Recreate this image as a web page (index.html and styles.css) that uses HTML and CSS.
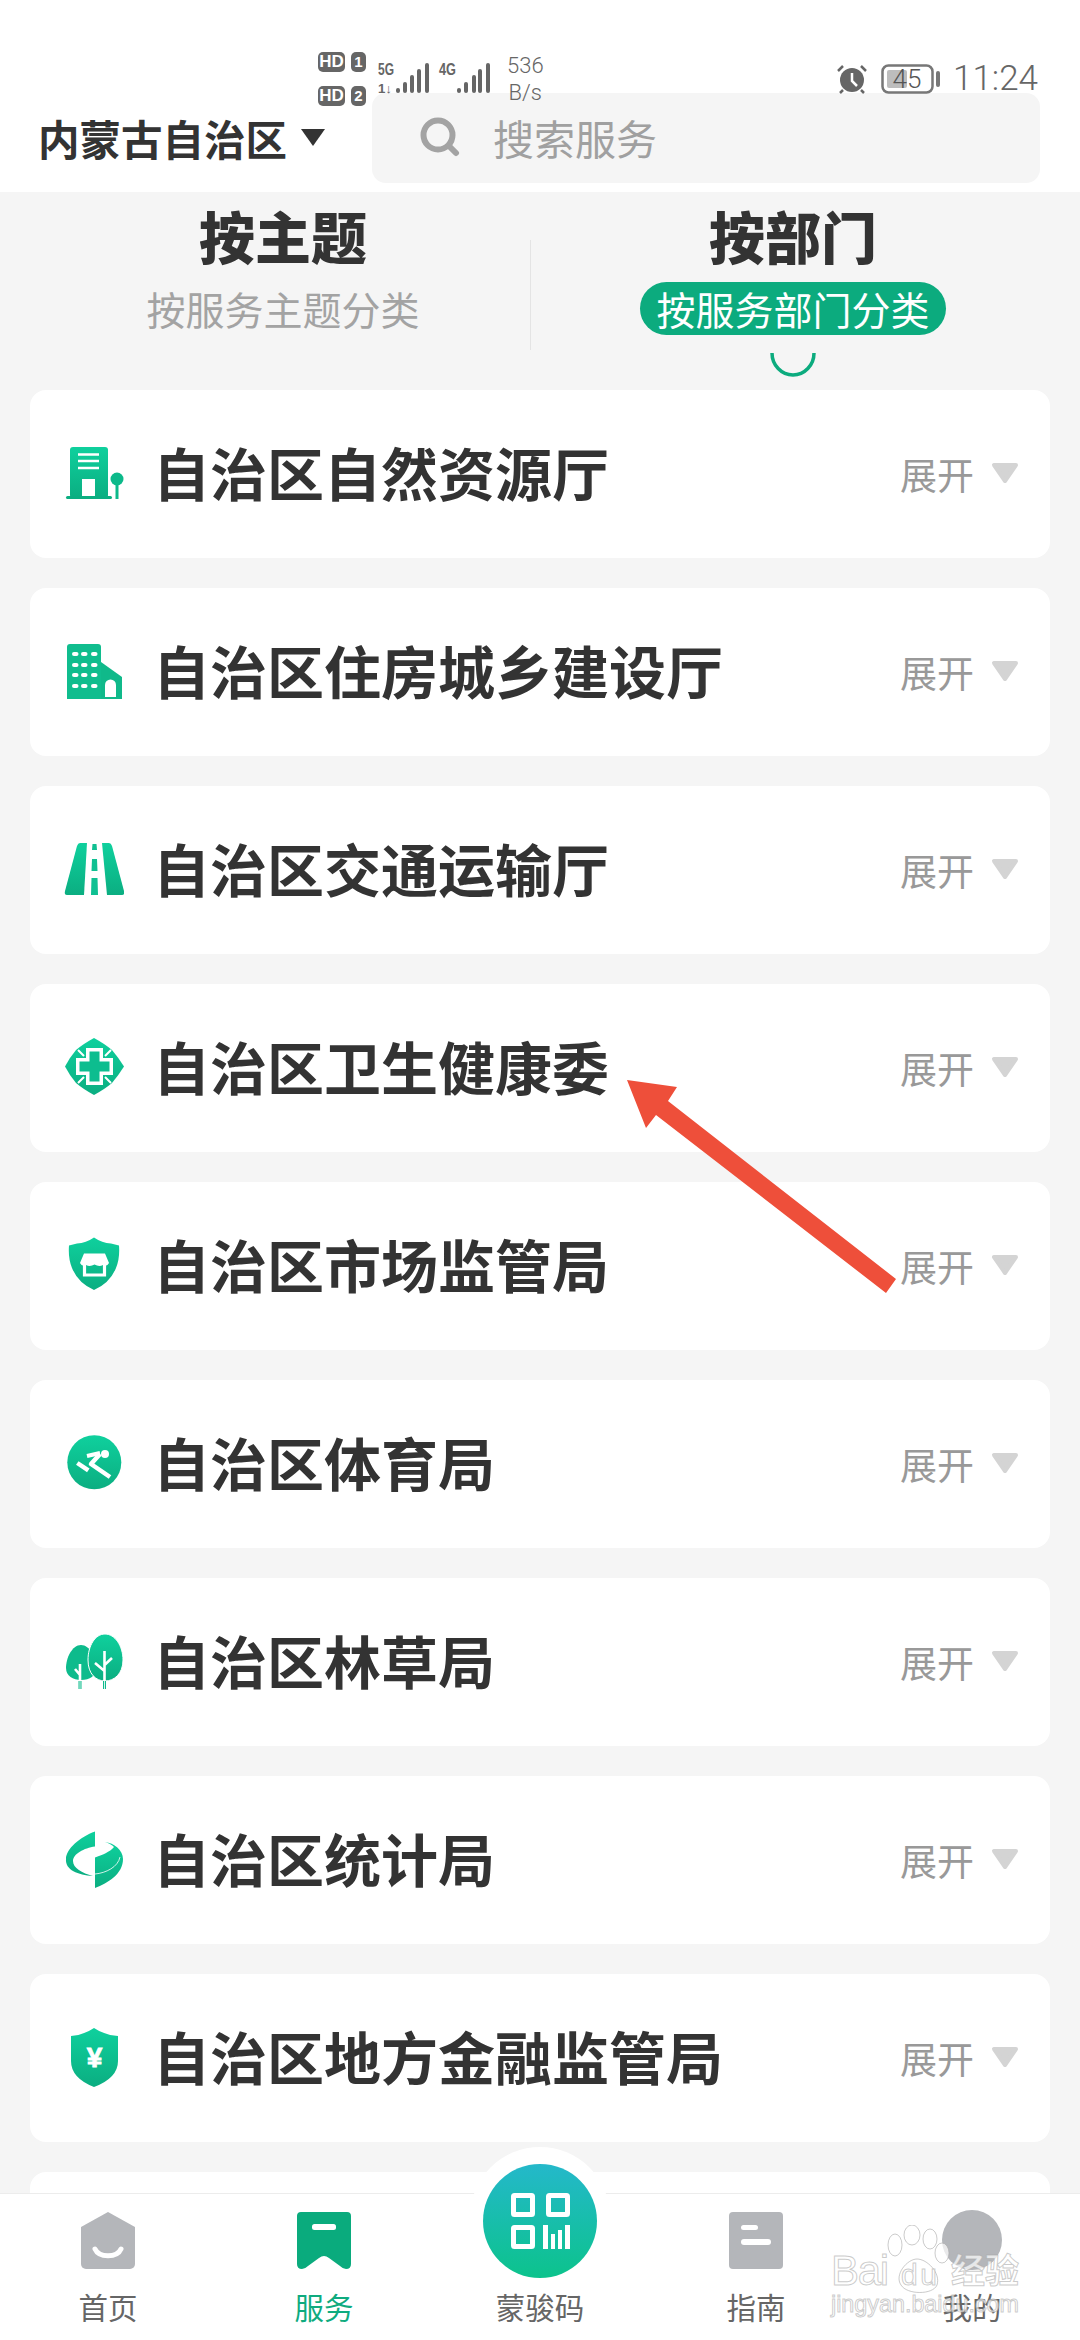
FILE: index.html
```html
<!DOCTYPE html>
<html lang="zh-CN">

<head>
  <meta charset="UTF-8" />
  <meta name="viewport" content="width=device-width, initial-scale=1.0" />
  <title>按部门</title>
  <link rel="stylesheet" href="styles.css">
</head>

<body>
  <div class="page">
    <svg class="defs" width="0" height="0">
      <defs>
        <linearGradient id="green" x1="0" y1="0" x2="0" y2="1">
          <stop offset="0" stop-color="#0fd09d" />
          <stop offset="1" stop-color="#0bae81" />
        </linearGradient>
        <linearGradient id="qrbg" x1="0" y1="0" x2="0" y2="1">
          <stop offset="0" stop-color="#24b8ca" />
          <stop offset="1" stop-color="#0cc38c" />
        </linearGradient>
      </defs>
    </svg>

    <!-- status bar -->
    <div class="status">
      <div class="sim">
        <div class="sim-row"><span class="hd">HD</span><span class="num">1</span></div>
        <div class="sim-row"><span class="hd">HD</span><span class="num">2</span></div>
      </div>
      <svg class="signal" width="120" height="36" viewBox="0 0 120 36">
        <text class="net" x="0" y="15" textLength="16" lengthAdjust="spacingAndGlyphs">5G</text>
        <text class="net small" x="0" y="33" textLength="14" lengthAdjust="spacingAndGlyphs">1↓</text>
        <g fill="#666">
          <rect x="18" y="28" width="4" height="5" rx="2" />
          <rect x="25" y="22" width="4" height="11" rx="2" />
          <rect x="32" y="15" width="4" height="18" rx="2" />
          <rect x="39" y="9" width="4" height="24" rx="2" />
          <rect x="47" y="3" width="4" height="30" rx="2" />
          <rect x="79" y="28" width="4" height="5" rx="2" />
          <rect x="86" y="22" width="4" height="11" rx="2" />
          <rect x="94" y="15" width="4" height="18" rx="2" />
          <rect x="100" y="9" width="4" height="24" rx="2" />
          <rect x="108" y="3" width="4" height="30" rx="2" />
        </g>
        <text class="net" x="61" y="15" textLength="17" lengthAdjust="spacingAndGlyphs">4G</text>
      </svg>
      <div class="speed"><span>536</span><span>B/s</span></div>
      <div class="status-right">
        <svg width="32" height="30" viewBox="0 0 32 30">
          <circle cx="16" cy="16" r="12" fill="#666" />
          <path d="M16 9v8l5 5" fill="none" stroke="#fff" stroke-width="2.5" />
          <path d="M2 7l5-5M30 7l-5-5M7 26l-3 3M25 26l3 3" stroke="#666" stroke-width="2.5" fill="none" />
        </svg>
        <svg width="59" height="30" viewBox="0 0 59 30">
          <rect x="1.5" y="1.5" width="50" height="27" rx="6" fill="none" stroke="#777" stroke-width="2.5" />
          <rect x="6" y="6" width="20" height="18" rx="2" fill="#bdbdbd" />
          <text class="batt" x="26" y="24" text-anchor="middle">45</text>
          <rect x="55" y="7" width="4" height="16" rx="2" fill="#777" />
        </svg>
        <span class="time">11:24</span>
      </div>
    </div>

    <header class="header">
      <div class="region">内蒙古自治区<span class="region-arrow"></span></div>
      <div class="search">
        <svg width="40" height="40" viewBox="0 0 40 40">
          <circle cx="18" cy="18" r="14.5" fill="none" stroke="#a3a3a3" stroke-width="6" />
          <path d="M29 29l7 7" stroke="#a3a3a3" stroke-width="6" stroke-linecap="round" />
        </svg>
        <span>搜索服务</span>
      </div>
    </header>

    <div class="tabs">
      <div class="tab">
        <div class="tab-title">按主题</div>
        <div class="tab-sub">按服务主题分类</div>
      </div>
      <div class="tab">
        <div class="tab-title">按部门</div>
        <div class="tab-sub active">按服务部门分类</div>
        <svg class="tab-arc" width="46" height="25" viewBox="0 0 46 25">
          <path d="M2 0A21 22 0 0 0 44 0" fill="none" stroke="#0cab7e" stroke-width="3.5" />
        </svg>
      </div>
      <div class="tab-line"></div>
    </div>

    <div class="list">
      <div class="card">
        <svg class="icon" viewBox="0 0 60 60">
          <rect x="6" y="3" width="38" height="51" rx="3" fill="url(#green)" />
          <rect x="2" y="52" width="46" height="3" rx="1.5" fill="#0bae81" />
          <path d="M14 10.5h21M14 17h21M14 24h21" stroke="#fff" stroke-width="2.6" />
          <rect x="18" y="35" width="13" height="17" fill="#fff" />
          <circle cx="53" cy="35" r="6.5" fill="#0cb98a" />
          <rect x="51.5" y="38" width="3" height="17" fill="#0cb98a" />
        </svg>
        <div class="card-title">自治区自然资源厅</div>
        <div class="more">展开</div>
        <svg class="caret" viewBox="0 0 28 22"><path d="M3 3H25L14 19Z" fill="#d4d4d4" stroke="#d4d4d4" stroke-width="4" stroke-linejoin="round" /></svg>
      </div>

      <div class="card">
        <svg class="icon" viewBox="0 0 60 60">
          <path d="M3 5a3 3 0 0 1 3-3h28a3 3 0 0 1 3 3v52H3Z" fill="#10bd8e" />
          <path d="M37 20L58 35V57H37Z" fill="#10b98a" />
          <g fill="#fff">
            <rect x="8" y="10" width="6.5" height="4" rx="2" /><rect x="17" y="10" width="6.5" height="4" rx="2" /><rect x="27" y="10" width="6.5" height="4" rx="2" />
            <rect x="8" y="21" width="6.5" height="4" rx="2" /><rect x="17" y="21" width="6.5" height="4" rx="2" /><rect x="27" y="21" width="6.5" height="4" rx="2" />
            <rect x="8" y="31" width="6.5" height="4" rx="2" /><rect x="17" y="31" width="6.5" height="4" rx="2" /><rect x="27" y="31" width="6.5" height="4" rx="2" />
            <rect x="8" y="42" width="6.5" height="4" rx="2" /><rect x="17" y="42" width="6.5" height="4" rx="2" /><rect x="27" y="42" width="6.5" height="4" rx="2" />
            <path d="M41 55V43a5.5 5.5 0 0 1 11 0V55Z" />
          </g>
        </svg>
        <div class="card-title">自治区住房城乡建设厅</div>
        <div class="more">展开</div>
        <svg class="caret" viewBox="0 0 28 22"><path d="M3 3H25L14 19Z" fill="#d4d4d4" stroke="#d4d4d4" stroke-width="4" stroke-linejoin="round" /></svg>
      </div>

      <div class="card">
        <svg class="icon" viewBox="0 0 60 60">
          <path d="M16 3H23L20 55H3Q0 55 1 51L13 6Q14 3 16 3Z" fill="url(#green)" />
          <path d="M38 3H45Q47 3 48 6L60 51Q61 55 58 55H43Z" fill="url(#green)" />
          <path d="M28.500 4H32.500L33 10H28ZM28 19H33L33.500 31H27.500ZM27.500 38H33.500L34 55H27Z" fill="#0fc092" />
        </svg>
        <div class="card-title">自治区交通运输厅</div>
        <div class="more">展开</div>
        <svg class="caret" viewBox="0 0 28 22"><path d="M3 3H25L14 19Z" fill="#d4d4d4" stroke="#d4d4d4" stroke-width="4" stroke-linejoin="round" /></svg>
      </div>

      <div class="card">
        <svg class="icon" viewBox="0 0 60 60">
          <path d="M30 0Q41 6 48 12Q54 19 60 28.500Q54 38 48 45Q41 51 30 57Q19 51 12 45Q6 38 1 28.500Q6 19 12 12Q19 6 30 0Z" fill="url(#green)" />
          <path d="M20 18L14 12M41 18L47 12M20 39L14 45M41 39L47 45" stroke="#fff" stroke-width="2" />
          <path d="M22 10H39V20H49V37H39V47H22V37H12V20H22Z" fill="#fff" />
          <path d="M25.500 13.500H35.500V23.500H45.500V33.500H35.500V43.500H25.500V33.500H15.500V23.500H25.500Z" fill="#0dbd8f" />
        </svg>
        <div class="card-title">自治区卫生健康委</div>
        <div class="more">展开</div>
        <svg class="caret" viewBox="0 0 28 22"><path d="M3 3H25L14 19Z" fill="#d4d4d4" stroke="#d4d4d4" stroke-width="4" stroke-linejoin="round" /></svg>
      </div>

      <div class="card">
        <svg class="icon" viewBox="0 0 60 60">
          <path d="M30 1.500Q38 7 47 7.500L55 9.500Q56 22 52 32Q46 47 30 54Q14 47 8 32Q4 22 5 9.500L13 7.500Q22 7 30 1.500Z" fill="url(#green)" />
          <path d="M20 17.500H41L45 27Q43 31 39 29Q35 31 30.500 28.500Q26 31 22 29Q18 31 16 27Z" fill="#fff" />
          <path d="M20.500 29V39H40.500V29" fill="none" stroke="#fff" stroke-width="3.200" />
        </svg>
        <div class="card-title">自治区市场监管局</div>
        <div class="more">展开</div>
        <svg class="caret" viewBox="0 0 28 22"><path d="M3 3H25L14 19Z" fill="#d4d4d4" stroke="#d4d4d4" stroke-width="4" stroke-linejoin="round" /></svg>
      </div>

      <div class="card">
        <svg class="icon" viewBox="0 0 60 60">
          <circle cx="30.300" cy="28.300" r="27" fill="url(#green)" />
          <circle cx="41" cy="20" r="4" fill="#fff" />
          <path d="M23 22L36 19" stroke="#fff" stroke-width="4" />
          <path d="M36 20L27 30L46 43" fill="none" stroke="#fff" stroke-width="4.500" stroke-linejoin="round" />
          <path d="M13.300 29L24.300 36.300" stroke="#fff" stroke-width="4.500" />
        </svg>
        <div class="card-title">自治区体育局</div>
        <div class="more">展开</div>
        <svg class="caret" viewBox="0 0 28 22"><path d="M3 3H25L14 19Z" fill="#d4d4d4" stroke="#d4d4d4" stroke-width="4" stroke-linejoin="round" /></svg>
      </div>

      <div class="card">
        <svg class="icon" viewBox="0 0 60 60">
          <path d="M17 13C8 13 2 26 2 36C2 44 9 48 17 48C26 48 32 44 32 36C32 26 26 13 17 13Z" fill="#0dbb8c" />
          <path d="M41 2C31 2 24 14 24 28C24 42 32 49 41 49C50 49 59 42 59 28C59 14 51 2 41 2Z" fill="url(#green)" stroke="#fff" stroke-width="1" />
          <path d="M16 32V49M11 37L16 43M40.500 19V49M31 31L40.500 39M48 26L40.500 33" stroke="#fff" stroke-width="2.600" fill="none" />
          <path d="M16 49V57M40.500 49V57" stroke="#0dbb8c" stroke-width="3" />
          <path d="M16 49V57M40.500 49V57" stroke="#d6f5ec" stroke-width="1" />
        </svg>
        <div class="card-title">自治区林草局</div>
        <div class="more">展开</div>
        <svg class="caret" viewBox="0 0 28 22"><path d="M3 3H25L14 19Z" fill="#d4d4d4" stroke="#d4d4d4" stroke-width="4" stroke-linejoin="round" /></svg>
      </div>

      <div class="card">
        <svg class="icon" viewBox="0 0 60 60">
          <path d="M31 1.500V16.500C20 18 9 24 9 31C9 38 18 43 29 46C14 45 1 40 2 29C2 19 16 7 31 1.500Z" fill="url(#green)" />
          <path d="M31 27.500C38 25 46 22 50 17C48 15 45 13 41 12C50 13 59 20 59 29C59 44 44 53 31 58Z" fill="url(#green)" />
          <path d="M31 44C42 43 54 37 56 27" fill="none" stroke="#fff" stroke-width="0.800" />
        </svg>
        <div class="card-title">自治区统计局</div>
        <div class="more">展开</div>
        <svg class="caret" viewBox="0 0 28 22"><path d="M3 3H25L14 19Z" fill="#d4d4d4" stroke="#d4d4d4" stroke-width="4" stroke-linejoin="round" /></svg>
      </div>

      <div class="card">
        <svg class="icon" viewBox="0 0 60 60">
          <path d="M30 0Q40 7 54 8V33Q54 50 30 59Q7 50 7 33V8Q20 7 30 0Z" fill="url(#green)" />
          <text class="yuan" x="30.500" y="39" text-anchor="middle">¥</text>
        </svg>
        <div class="card-title">自治区地方金融监管局</div>
        <div class="more">展开</div>
        <svg class="caret" viewBox="0 0 28 22"><path d="M3 3H25L14 19Z" fill="#d4d4d4" stroke="#d4d4d4" stroke-width="4" stroke-linejoin="round" /></svg>
      </div>

      <div class="card"></div>
    </div>

    <nav class="tabbar">
      <div class="bump"></div>
      <div class="nav-item">
        <svg class="nav-icon" width="56" height="57" viewBox="0 0 56 57">
          <path d="M28 0L55 15V52a5 5 0 0 1-5 5H6a5 5 0 0 1-5-5V15Z" fill="#b4b6ba" />
          <path d="M15 37C19 46 37 46 41 37" fill="none" stroke="#fff" stroke-width="5" stroke-linecap="round" />
        </svg>
        <span>首页</span>
      </div>
      <div class="nav-item on">
        <svg class="nav-icon" width="56" height="57" viewBox="0 0 56 57">
          <path d="M5 0H51a4 4 0 0 1 4 4V52q0 5-5 5q-3 0-6-3L33 46q-5-4-10 0L12 54q-3 3-6 3q-5 0-5-5V4a4 4 0 0 1 4-4Z" fill="#0aab7d" />
          <rect x="16" y="12" width="24" height="6" rx="2.500" fill="#fff" />
        </svg>
        <span>服务</span>
      </div>
      <div class="nav-item">
        <div class="nav-icon-gap"></div>
        <svg class="qr" width="114" height="114" viewBox="0 0 114 114">
          <circle cx="57" cy="57" r="57" fill="url(#qrbg)" />
          <g fill="none" stroke="#fff" stroke-width="5">
            <rect x="30.500" y="31.500" width="19" height="19" rx="1" />
            <rect x="65.500" y="31.500" width="19" height="19" rx="1" />
            <rect x="30.500" y="63.500" width="19" height="19" rx="1" />
          </g>
          <g fill="#fff">
            <rect x="60" y="61" width="5" height="24" />
            <rect x="68" y="70" width="4" height="15" />
            <rect x="75" y="66" width="4" height="19" />
            <rect x="82" y="61" width="5" height="24" />
          </g>
        </svg>
        <span>蒙骏码</span>
      </div>
      <div class="nav-item">
        <svg class="nav-icon" width="56" height="57" viewBox="0 0 56 57">
          <rect x="1" y="0" width="54" height="57" rx="4" fill="#b4b6ba" />
          <rect x="13" y="13" width="17" height="5" rx="2.500" fill="#fff" />
          <rect x="13" y="27" width="30" height="6" rx="3" fill="#fff" />
        </svg>
        <span>指南</span>
      </div>
      <div class="nav-item">
        <svg class="nav-icon" width="60" height="57" viewBox="0 0 60 57">
          <circle cx="30" cy="28" r="30" fill="#b4b6ba" />
        </svg>
        <span>我的</span>
      </div>
    </nav>

    <!-- baidu watermark -->
    <svg class="watermark" width="240" height="100" viewBox="0 0 240 100">
      <g fill="#fff" fill-opacity="0.7" stroke="#a9a9a9" stroke-opacity="0.6" stroke-width="1">
        <text class="wm-big" x="2" y="60" textLength="58">Bai</text>
        <ellipse cx="66" cy="20" rx="7" ry="11" />
        <ellipse cx="83" cy="10" rx="8" ry="10" />
        <ellipse cx="101" cy="14" rx="7" ry="10" />
        <ellipse cx="113" cy="28" rx="7" ry="10" />
        <path d="M72 60C65 50 78 34 88 34C98 34 112 48 108 60C104 70 78 70 72 60Z" />
        <text class="wm-du" x="72" y="60" textLength="36">du</text>
        <text class="wm-cn" x="122" y="58" textLength="68">经验</text>
        <text class="wm-url" x="2" y="87" textLength="188" lengthAdjust="spacingAndGlyphs">jingyan.baidu.com</text>
      </g>
    </svg>

    <!-- red arrow drawn on the screenshot -->
    <svg class="arrow" width="285" height="225" viewBox="0 0 285 225">
      <polygon points="7,5 57,12 48,26 276,204 266,218 36,40 26,53" fill="#ee4f3a" />
    </svg>
  </div>
</body>

</html>
```

FILE: styles.css
```css
* {
  box-sizing: border-box;
}

body {
  margin: 0;
  background-color: #f5f5f5;
  font-family: "Noto Sans CJK SC", "Noto Sans", sans-serif;
}

.page {
  position: relative;
  display: flex;
  flex-direction: column;
  width: 1080px;
  height: 2340px;
  overflow: hidden;
  background-color: #f5f5f5;
}

.defs {
  position: absolute;
}

/* status bar sits on top of the header */
.status {
  position: absolute;
  top: 0;
  left: 0;
  right: 0;
  z-index: 5;
  display: flex;
  align-items: flex-start;
  padding: 52px 42px 0 318px;
  color: #666;
}

.sim {
  display: flex;
  flex-direction: column;
  gap: 14px;
}

.sim-row {
  display: flex;
  gap: 6px;
}

.hd,
.num {
  display: block;
  height: 20px;
  border-radius: 5px;
  background-color: #666;
  color: #fff;
  font-family: "Liberation Sans", sans-serif;
  font-size: 17px;
  font-weight: 700;
  line-height: 20px;
  text-align: center;
}

.hd {
  width: 27px;
}

.num {
  width: 15px;
  font-size: 15px;
}

.signal {
  margin: 8px 0 0 12px;
}

.net {
  font-family: "Liberation Sans", sans-serif;
  font-size: 17px;
  font-weight: 700;
  fill: #666;
}

.net.small {
  font-size: 13px;
}

.speed {
  display: flex;
  flex-direction: column;
  align-items: center;
  margin-left: 9px;
  font-family: Roboto, sans-serif;
  font-size: 22px;
  font-weight: 300;
  line-height: 27px;
}

.status-right {
  display: flex;
  align-items: center;
  gap: 13px;
  margin: 12px 0 0 auto;
}

.batt {
  font-family: Roboto, sans-serif;
  font-size: 26px;
  font-weight: 300;
  fill: #555;
}

.time {
  font-family: Roboto, sans-serif;
  font-size: 35px;
  font-weight: 300;
  line-height: 30px;
}

/* header */
.header {
  display: flex;
  align-items: flex-start;
  justify-content: space-between;
  height: 192px;
  padding: 93px 40px 0 38px;
  background-color: #fff;
}

.region {
  display: flex;
  align-items: center;
  height: 90px;
  color: #333;
  font-size: 41.500px;
  font-weight: 700;
}

.region-arrow {
  width: 0;
  height: 0;
  margin-left: 14px;
  margin-bottom: 2px;
  border-top: 17px solid #333;
  border-left: 12px solid transparent;
  border-right: 12px solid transparent;
}

.search {
  display: flex;
  align-items: center;
  gap: 33px;
  width: 668px;
  height: 90px;
  padding-left: 48px;
  padding-bottom: 2px;
  border-radius: 14px;
  background-color: #f5f5f5;
  color: #a0a0a0;
  font-size: 41px;
}

/* tabs */
.tabs {
  position: relative;
  display: grid;
  grid-template-columns: 1fr 1fr;
  height: 198px;
  padding: 13px 32px 0 28px;
}

.tab {
  display: flex;
  flex-direction: column;
  align-items: center;
}

.tab-title {
  color: #333;
  font-size: 56px;
  font-weight: 900;
  line-height: 60px;
}

.tab-sub {
  height: 53px;
  margin-top: 17px;
  padding: 0 16px;
  border-radius: 27px;
  color: #a3a3a3;
  font-size: 39px;
  line-height: 53px;
}

.tab-sub.active {
  background-color: #0cab7e;
  color: #fff;
}

.tab-arc {
  margin-top: 18px;
}

.tab-line {
  position: absolute;
  top: 48px;
  left: 530px;
  width: 1px;
  height: 110px;
  background-color: #e4e4e4;
}

/* department list */
.list {
  flex: 1;
  min-height: 0;
  overflow: hidden;
  display: flex;
  flex-direction: column;
  gap: 30px;
  padding: 0 30px;
}

.card {
  flex: none;
  display: flex;
  align-items: center;
  height: 168px;
  padding: 0 31px 0 34px;
  border-radius: 16px;
  background-color: #fff;
}

.icon {
  flex: none;
  width: 60px;
  height: 60px;
}

.card-title {
  flex: 1;
  margin-left: 29px;
  margin-bottom: 6px;
  color: #333;
  font-size: 57px;
  font-weight: 700;
}

.more {
  color: #999;
  font-size: 37px;
}

.caret {
  width: 28px;
  height: 22px;
  margin-left: 17px;
  margin-bottom: 2px;
}

.yuan {
  font-family: "Liberation Sans", sans-serif;
  font-size: 28px;
  font-weight: 700;
  fill: #fff;
  stroke: #fff;
  stroke-width: 0.8px;
}

/* bottom navigation */
.tabbar {
  position: relative;
  flex: none;
  display: grid;
  grid-template-columns: repeat(5, 1fr);
  height: 147px;
  padding-top: 18px;
  border-top: 1px solid #ececec;
  background-color: #fff;
}

.bump {
  position: absolute;
  top: -47px;
  left: 470px;
  width: 140px;
  height: 140px;
  border-radius: 50%;
  background-color: #fff;
}

.nav-item {
  position: relative;
  display: flex;
  flex-direction: column;
  align-items: center;
  gap: 19px;
  color: #666;
  font-size: 29.500px;
  line-height: 36px;
}

.nav-item.on {
  color: #0fab7f;
}

.nav-icon {
  overflow: visible;
}

.nav-icon-gap {
  height: 57px;
}

.qr {
  position: absolute;
  top: -48px;
  left: 51px;
}

.watermark {
  position: absolute;
  left: 829px;
  top: 2225px;
  z-index: 6;
}

.wm-big {
  font-family: "Liberation Sans", sans-serif;
  font-size: 42px;
}

.wm-du {
  font-family: "Liberation Sans", sans-serif;
  font-size: 30px;
}

.wm-cn {
  font-size: 34px;
  font-weight: 700;
}

.wm-url {
  font-family: "Liberation Sans", sans-serif;
  font-size: 24px;
}

.arrow {
  position: absolute;
  left: 620px;
  top: 1075px;
  z-index: 6;
}
```
